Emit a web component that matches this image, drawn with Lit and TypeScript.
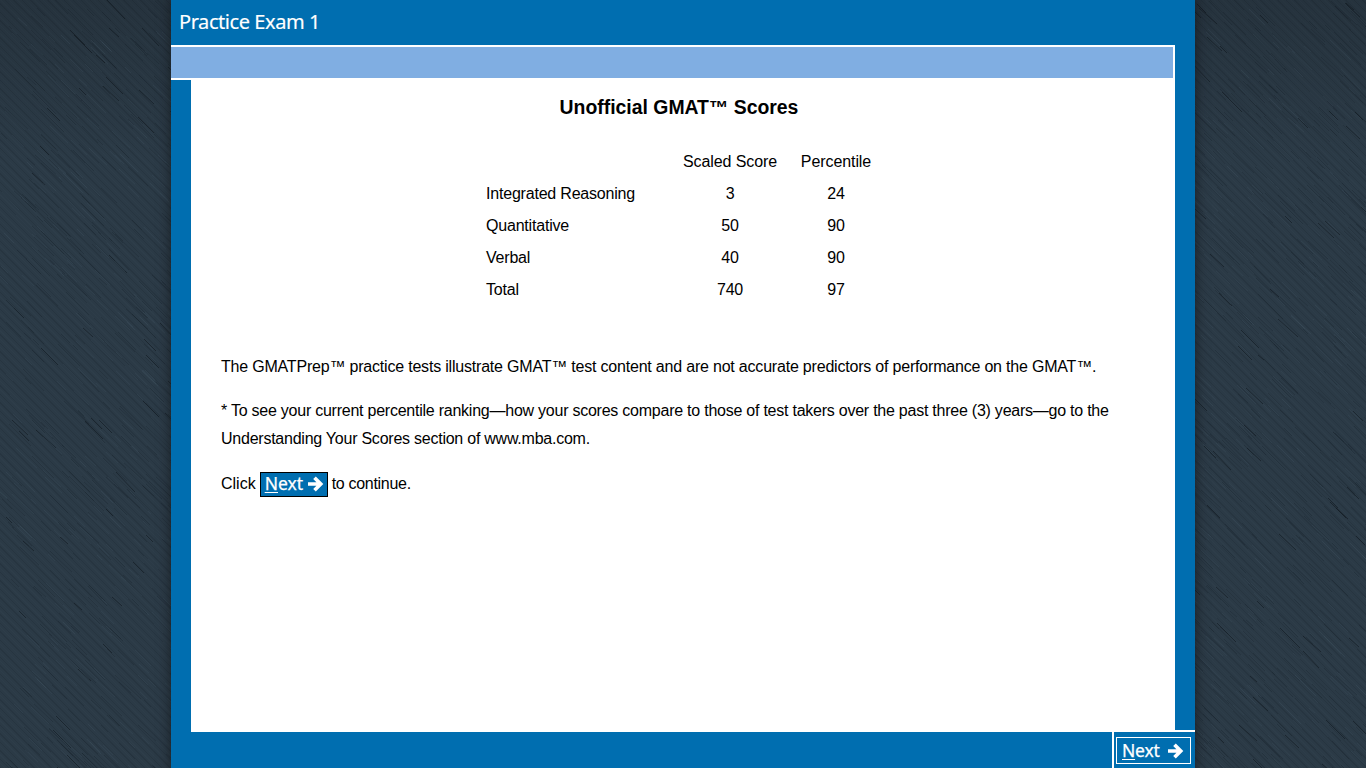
import { LitElement, html, css, svg } from "lit";
import { customElement } from "lit/decorators.js";

const arrow = html`<svg class="arrow" viewBox="0 0 16 16" aria-hidden="true"><path d="M0 8H12M6.5 1.8L12.7 8L6.5 14.2" fill="none" stroke="#fff" stroke-width="3.7"/></svg>`;
const rows = [
  ["Integrated Reasoning", "3", "24"],
  ["Quantitative", "50", "90"],
  ["Verbal", "40", "90"],
  ["Total", "740", "97"],
];

// Seeded streaks that imitate the brushed, diagonal texture of the backdrop.
function streaks(count: number, seed: number, minLen: number, maxLen: number) {
  let s = seed;
  const rnd = () => {
    s = (s * 1664525 + 1013904223) % 4294967296;
    return s / 4294967296;
  };
  let d = "";
  for (let i = 0; i < count; i++) {
    const x = Math.round(rnd() * 1366);
    const y = Math.round(rnd() * 768);
    const l = Math.round(minLen + rnd() * (maxLen - minLen));
    d += `M${x} ${y}l${l} ${Math.round(l * (0.9 + rnd() * 0.15))}`;
  }
  return d;
}
const darkStreaks = streaks(2800, 7, 5, 26);
const darkerStreaks = streaks(420, 23, 6, 20);
const lightStreaks = streaks(2000, 91, 5, 22);

@customElement("app-root")
export class AppRoot extends LitElement {
  static styles = css`
    :host { display: block; position: relative; height: 768px; overflow: hidden; font-family: "Liberation Sans", Arial, sans-serif; color: #000;
      background-color: #2b3a46;
      background-image:
        linear-gradient(180deg, rgba(15,20,25,.2), transparent 160px),
        repeating-linear-gradient(45deg, rgba(14,22,30,.14) 0 1px, transparent 1px 3px, rgba(90,110,125,.05) 3px 4px, transparent 4px 6px);
    }
    .tex { position: absolute; inset: 0; width: 1366px; height: 768px; }
    .frame { position: relative; box-sizing: border-box; width: 1024px; height: 768px; margin-left: 171px; background: #006eb0; display: flex; flex-direction: column; box-shadow: 0 0 10px 2px rgba(18,22,26,.6); }
    .title { height: 45px; flex: none; display: flex; align-items: center; padding: 0 0 2px 8px; box-sizing: border-box; color: #fff; font: 20px/1 "Noto Sans", Tahoma, sans-serif; letter-spacing: -0.43px; -webkit-text-stroke: .15px #fff; }
    .band { height: 31px; flex: none; width: 1002px; background: #80aee2; border-top: 2px solid #fff; border-right: 2px solid #fff; }
    .strip { flex: none; height: 2px; width: 1004px; background: #fff; }
    .body { flex: none; box-sizing: border-box; height: 652px; width: 984px; margin-left: 20px; background: #fff; padding-top: 17px; }
    h1 { margin: 0 0 0 -8px; text-align: center; font-size: 19.4px; line-height: 21px; font-weight: 700; }
    .table { display: grid; grid-template-columns: 191px 106px 106px; margin: 28px 0 0 295px; font-size: 16px; letter-spacing: -0.2px; }
    .table > div { height: 32px; line-height: 32px; text-align: center; white-space: nowrap; }
    .table > div.l { text-align: left; }
    .table > div.head { letter-spacing: -0.08px; }
    .text { margin: 0 30px; font-size: 16px; line-height: 28px; }
    .p1 { margin-top: 47px; letter-spacing: -0.2px; }
    .p2 { margin-top: 16px; letter-spacing: -0.24px; }
    .p3 { margin-top: 17px; display: flex; align-items: center; gap: 4px; height: 28px; }
    .tail { letter-spacing: -0.3px; }
    .inline { box-sizing: border-box; width: 68px; height: 25px; background: #006eb0; border: 1px solid #000; color: #fff; display: flex; align-items: center; gap: 5px; padding-left: 4px; font: 17.5px/1 "Noto Sans", Tahoma, sans-serif; -webkit-text-stroke: .25px #fff; }
    u { text-underline-offset: 2px; }
    .arrow { width: 16px; height: 16px; flex: none; }
    .foot { flex: 1; display: flex; justify-content: flex-end; }
    .cell { box-sizing: border-box; width: 83px; height: 38px; margin-top: -2px; border-top: 2px solid #fff; border-left: 2px solid #fff; padding: 5px 4px 4px 2px; }
    .next { box-sizing: border-box; height: 27px; border: 1px solid #fff; color: #fff; display: flex; align-items: center; gap: 8px; padding-left: 5px; font: 17.5px/1 "Noto Sans", Tahoma, sans-serif; letter-spacing: -0.2px; -webkit-text-stroke: .25px #fff; }
  `;

  render() {
    return html`
    <svg class="tex" viewBox="0 0 1366 768" aria-hidden="true">
      ${svg`<path d=${darkStreaks} stroke="#111a22" stroke-opacity=".24" fill="none"/>
      <path d=${darkerStreaks} stroke="#0b1218" stroke-opacity=".5" fill="none"/>
      <path d=${lightStreaks} stroke="#5d7384" stroke-opacity=".12" fill="none"/>`}
    </svg>
    <div class="frame">
      <div class="title">Practice Exam 1</div>
      <div class="band"></div>
      <div class="strip"></div>
      <div class="body">
        <h1>Unofficial GMAT™ Scores</h1>
        <div class="table">
          <div></div><div class="head">Scaled Score</div><div class="head">Percentile</div>
          ${rows.map((r) => html`<div class="l">${r[0]}</div><div>${r[1]}</div><div>${r[2]}</div>`)}
        </div>
        <div class="text p1">The GMATPrep™ practice tests illustrate GMAT™ test content and are not accurate predictors of performance on the GMAT™.</div>
        <div class="text p2">* To see your current percentile ranking—how your scores compare to those of test takers over the past three (3) years—go to the Understanding Your Scores section of www.mba.com.</div>
        <div class="text p3">Click <span class="inline"><span><u>N</u>ext</span>${arrow}</span> <span class="tail">to continue.</span></div>
      </div>
      <div class="foot"><div class="cell"><div class="next"><span><u>N</u>ext</span>${arrow}</div></div></div>
    </div>`;
  }
}
